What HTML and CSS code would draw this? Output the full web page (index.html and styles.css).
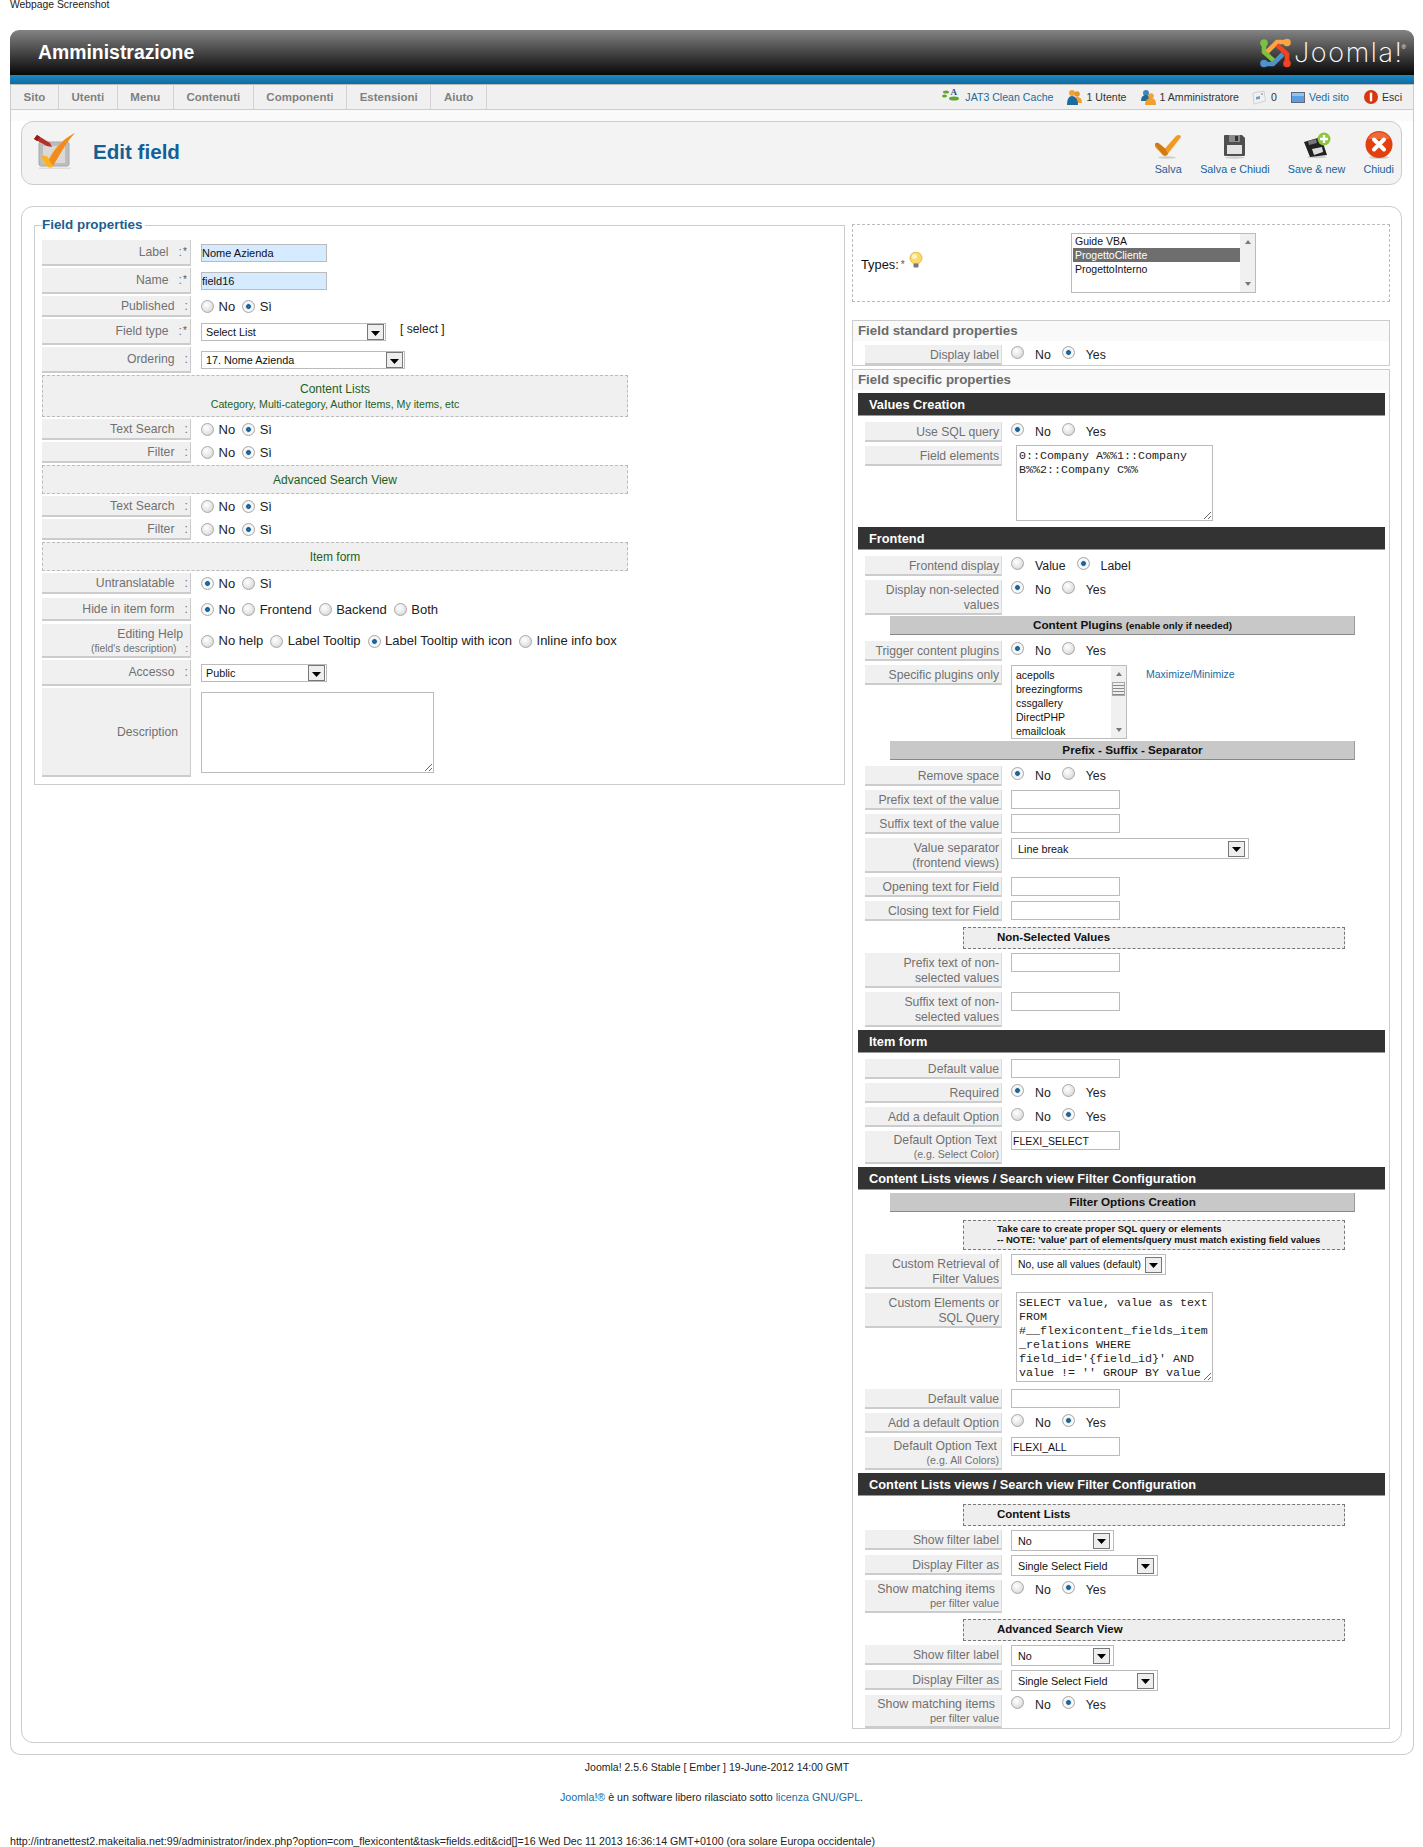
FILE: index.html
```html
<!DOCTYPE html>
<html lang="it">
<head>
<meta charset="utf-8">
<title>Edit field</title>
<link rel="stylesheet" href="styles.css">
</head>
<body>
<svg class="defs" width="0" height="0" aria-hidden="true">
  <symbol id="i-user" viewBox="0 0 15 15">
    <circle cx="10" cy="4" r="2.800" fill="#e8952a"/>
    <path d="M6 13c0-4 1.500-6 4.500-6s4.500 2 4.500 6z" fill="#f0a030"/>
    <circle cx="5" cy="3" r="3" fill="#efa235"/>
    <path d="M0 15c0-6 2-9 5-9s6 3 6 9z" fill="#1f6a9c"/>
  </symbol>
  <symbol id="i-admin" viewBox="0 0 15 15">
    <circle cx="5" cy="3" r="3" fill="#3d86b8"/>
    <path d="M0 11c0-4 2-6 5-6s4 2 4 6z" fill="#1f6a9c"/>
    <circle cx="10" cy="6" r="2.800" fill="#efa235"/>
    <path d="M4 15c0-4 2-7 6-7s5 3 5 7z" fill="#f0a030"/>
  </symbol>
  <symbol id="i-select-arrow" viewBox="0 0 9 5"><path d="M0 0h9L4.500 5z" fill="#000"/></symbol>
</svg>

<p class="shot-title">Webpage Screenshot</p>

<div class="admin">
  <header class="brand">
    <h1 class="brand-title">Amministrazione</h1>
    <div class="logo">
      <svg class="logo-mark" viewBox="0 0 31 30" width="31" height="30" fill="none" stroke-width="4.600">
        <path d="M4 5v9l10 9" stroke="#7ac143"/><circle cx="4" cy="5" r="3.800" fill="#7ac143"/>
        <path d="M26 4h-9L7 14" stroke="#f9a541"/><circle cx="27" cy="4.500" r="3.800" fill="#f9a541"/>
        <path d="M27 25v-9L17 7" stroke="#f44321"/><circle cx="27" cy="25.500" r="3.800" fill="#f44321"/>
        <path d="M4 26h9l10-10" stroke="#5091cd"/><circle cx="4" cy="25.500" r="3.800" fill="#5091cd"/>
      </svg>
      <span class="logo-word">Joomla!</span><sup class="logo-reg">®</sup>
    </div>
  </header>
  <div class="blue-strip"></div>
  <nav class="menubar">
    <ul class="menu">
      <li>Sito</li><li>Utenti</li><li>Menu</li><li>Contenuti</li><li>Componenti</li><li>Estensioni</li><li>Aiuto</li>
    </ul>
    <ul class="status">
      <li class="st-link st-jat">
        <svg width="17" height="14" viewBox="0 0 17 14"><ellipse cx="4" cy="5" rx="3" ry="1.500" fill="#5ea832"/><ellipse cx="2.500" cy="9" rx="2.500" ry="1.500" fill="#5ea832"/><ellipse cx="12" cy="11.500" rx="5" ry="2" fill="#5ea832"/><text x="8.500" y="8" class="jat-a">A</text></svg>
        JAT3 Clean Cache
      </li>
      <li class="st-user"><svg width="15" height="15"><use href="#i-user"/></svg>1 Utente</li>
      <li class="st-admin"><svg width="15" height="15"><use href="#i-admin"/></svg>1 Amministratore</li>
      <li class="st-msg">
        <svg width="14" height="15" viewBox="0 0 14 15"><path d="M1 3l11-2 1.500 10L2 14z" fill="#f1f1f1" stroke="#d0d0d0"/><path d="M4 7l4-1v3l-4 .5z" fill="#6f9fc4"/><circle cx="10" cy="4" r="1" fill="#8ab"/></svg>
        0
      </li>
      <li class="st-link st-site">
        <svg width="14" height="11" viewBox="0 0 14 11"><rect x=".5" y=".5" width="13" height="10" fill="#5aa0e0" stroke="#667"/><rect x="1" y="1" width="12" height="3" fill="#8cc4f4"/></svg>
        Vedi sito
      </li>
      <li class="st-out">
        <svg width="14" height="14" viewBox="0 0 14 14"><circle cx="7" cy="7" r="7" fill="#d9360f"/><rect x="5.800" y="2.500" width="2.400" height="9" rx="1" fill="#fff"/></svg>
        Esci
      </li>
    </ul>
  </nav>

  <div class="body-wrap">
    <section class="toolbar-box">
      <div class="page-head">
        <svg class="page-icon" width="44" height="40" viewBox="0 0 44 40">
          <rect x="6" y="11" width="30" height="24" rx="2" fill="#bdbdbd" stroke="#a8a8a8"/>
          <rect x="10" y="15" width="22" height="17" fill="#d9d9d9"/>
          <rect x="6" y="36.500" width="32" height="1.500" fill="#ddd"/>
          <path d="M9 25c3-1 6 0 7 3 5-10 12-19 26-26-9 9-16 23-22 33-1 2-3 2-5 1-4-3-6-7-6-11z" fill="#fbb320"/>
          <path d="M42 2c-9 9-16 23-22 33l-4-6C21 19 29 9 42 2z" fill="#f28a1e"/>
          <path d="M1 8l3-4 13 8 2 4-5-1z" fill="#b8302a"/>
          <path d="M1 8l3-4 3 2-3 4z" fill="#8d1f1c"/>
        </svg>
        <h2 class="page-title">Edit field</h2>
      </div>
      <ul class="actions">
        <li class="act act-save">
          <svg width="28" height="25" viewBox="0 0 28 25"><ellipse cx="13" cy="23.500" rx="9" ry="1.200" fill="#ccc"/><path d="M1 11c0-2 2-3 4-1.500l6 5L22 2c2-2 5-1 5 1L13 21c-1 1-3 1-4 0L2 14c-1-1-1-2-1-3z" fill="#f09a24"/><path d="M1 11l8 10c1 1 3 1 4 0l1-1-3-5.500-6-5c-2-1.500-4-.5-4 1.500z" fill="#cf7a14"/></svg>
          <span>Salva</span>
        </li>
        <li class="act act-close-save">
          <svg width="24" height="25" viewBox="0 0 24 25"><ellipse cx="12" cy="23.500" rx="10" ry="1.200" fill="#ccc"/><path d="M2 1h17l3 3v17a1 1 0 0 1-1 1H2a1 1 0 0 1-1-1V2a1 1 0 0 1 1-1z" fill="#4f4f4f"/><rect x="4" y="11" width="15" height="9" fill="#e4e4e4"/><rect x="6" y="1" width="11" height="7" fill="#8a8a8a"/><rect x="12" y="2" width="3" height="5" fill="#333"/></svg>
          <span>Salva e Chiudi</span>
        </li>
        <li class="act act-new">
          <svg width="28" height="27" viewBox="0 0 28 27"><ellipse cx="14" cy="25" rx="10" ry="1.200" fill="#ccc"/><path d="M1 10L18 5l6 18-17 2z" fill="#222"/><path d="M9 17l10-2 1 5-9 3z" fill="#dcdcdc"/><path d="M5 9l8-2 1 4-8 2z" fill="#777"/><circle cx="21" cy="7" r="6.500" fill="#8cc63f"/><path d="M21 3v8M17 7h8" stroke="#fff" stroke-width="2.400"/></svg>
          <span>Save &amp; new</span>
        </li>
        <li class="act act-close">
          <svg width="28" height="28" viewBox="0 0 28 28"><ellipse cx="14" cy="26.500" rx="10" ry="1.300" fill="#ccc"/><circle cx="14" cy="13.500" r="13.500" fill="#e2400f"/><path d="M14 1a13 11 0 0 1 11 7H3a13 11 0 0 1 11-7z" fill="#ef6a38"/><path d="M9 8.500l10 10M19 8.500l-10 10" stroke="#fff" stroke-width="4" stroke-linecap="round"/></svg>
          <span>Chiudi</span>
        </li>
      </ul>
    </section>

    <section class="content-box">
      <fieldset class="props">
        <legend class="props-legend">Field properties</legend>
        <div class="l-row h26"><div class="l-lbl">Label &nbsp; :<span class="req">*</span></div><div class="l-val"><input class="txt hl" type="text" value="Nome Azienda"></div></div>
        <div class="l-row h26"><div class="l-lbl">Name &nbsp; :<span class="req">*</span></div><div class="l-val"><input class="txt hl" type="text" value="field16"></div></div>
        <div class="l-row h21"><div class="l-lbl">Published &nbsp; :</div><div class="l-val"><input class="rd" type="radio" name="a"><label>No</label><input class="rd" type="radio" name="a" checked><label>Sì</label></div></div>
        <div class="l-row h26"><div class="l-lbl">Field type &nbsp; :<span class="req">*</span></div><div class="l-val"><div class="sel s-type"><span>Select List</span><i class="sel-btn"><svg width="9" height="5"><use href="#i-select-arrow"/></svg></i></div><span class="sel-link">[ select ]</span></div></div>
        <div class="l-row h26"><div class="l-lbl">Ordering &nbsp; :</div><div class="l-val"><div class="sel s-order"><span>17. Nome Azienda</span><i class="sel-btn"><svg width="9" height="5"><use href="#i-select-arrow"/></svg></i></div></div></div>
        <div class="l-head tall"><strong>Content Lists</strong><small>Category, Multi-category, Author Items, My items, etc</small></div>
        <div class="l-row h21"><div class="l-lbl">Text Search &nbsp; :</div><div class="l-val"><input class="rd" type="radio" name="b"><label>No</label><input class="rd" type="radio" name="b" checked><label>Sì</label></div></div>
        <div class="l-row h21"><div class="l-lbl">Filter &nbsp; :</div><div class="l-val"><input class="rd" type="radio" name="c"><label>No</label><input class="rd" type="radio" name="c" checked><label>Sì</label></div></div>
        <div class="l-head"><strong>Advanced Search View</strong></div>
        <div class="l-row h21"><div class="l-lbl">Text Search &nbsp; :</div><div class="l-val"><input class="rd" type="radio" name="d"><label>No</label><input class="rd" type="radio" name="d" checked><label>Sì</label></div></div>
        <div class="l-row h21"><div class="l-lbl">Filter &nbsp; :</div><div class="l-val"><input class="rd" type="radio" name="e"><label>No</label><input class="rd" type="radio" name="e" checked><label>Sì</label></div></div>
        <div class="l-head"><strong>Item form</strong></div>
        <div class="l-row h21 after-head"><div class="l-lbl">Untranslatable &nbsp; :</div><div class="l-val"><input class="rd" type="radio" name="f" checked><label>No</label><input class="rd" type="radio" name="f"><label>Sì</label></div></div>
        <div class="l-row h23"><div class="l-lbl">Hide in item form &nbsp; :</div><div class="l-val"><input class="rd" type="radio" name="g" checked><label>No</label><input class="rd" type="radio" name="g"><label>Frontend</label><input class="rd" type="radio" name="g"><label>Backend</label><input class="rd" type="radio" name="g"><label>Both</label></div></div>
        <div class="l-row h34"><div class="l-lbl two"><span>Editing Help</span><small>(field's description) &nbsp; :</small></div><div class="l-val"><input class="rd" type="radio" name="h"><label>No help</label><input class="rd" type="radio" name="h"><label>Label Tooltip</label><input class="rd" type="radio" name="h" checked><label>Label Tooltip with icon</label><input class="rd" type="radio" name="h"><label>Inline info box</label></div></div>
        <div class="l-row h26"><div class="l-lbl">Accesso &nbsp; :</div><div class="l-val"><div class="sel s-access"><span>Public</span><i class="sel-btn"><svg width="9" height="5"><use href="#i-select-arrow"/></svg></i></div></div></div>
        <div class="l-row h89 last"><div class="l-lbl desc">Description</div><div class="l-val"><textarea class="ta-desc"></textarea></div></div>
      </fieldset>

      <div class="side">
        <div class="types">
          <div class="types-label">Types:<span class="req">*</span>
            <svg class="bulb" width="14" height="17" viewBox="0 0 14 17"><circle cx="7" cy="6" r="6" fill="#fbd96b" stroke="#e6b84a"/><circle cx="5.500" cy="4.500" r="2.500" fill="#fff3c4"/><rect x="4.500" y="11.500" width="5" height="4" rx="1" fill="#777"/></svg>
          </div>
          <div class="listbox lb-types">
            <div class="lb-items"><div>Guide VBA</div><div class="on">ProgettoCliente</div><div>ProgettoInterno</div></div>
            <div class="sbar"><i class="up"></i><i class="down"></i></div>
          </div>
        </div>

        <div class="pbox std">
          <h3 class="pbox-title">Field standard properties</h3>
          <div class="r-row"><div class="r-lbl">Display label</div><div class="r-val"><input class="rd" type="radio" name="r1"><label>No</label><input class="rd" type="radio" name="r1" checked><label>Yes</label></div></div>
        </div>

        <div class="pbox specific">
          <h3 class="pbox-title">Field specific properties</h3>
          <h4 class="bar">Values Creation</h4>
          <div class="r-row"><div class="r-lbl">Use SQL query</div><div class="r-val"><input class="rd" type="radio" name="r2" checked><label>No</label><input class="rd" type="radio" name="r2"><label>Yes</label></div></div>
          <div class="r-row"><div class="r-lbl">Field elements</div><div class="r-val"><textarea class="mono ta-a">0::Company A%%1::Company B%%2::Company C%%</textarea></div></div>

          <h4 class="bar mt2">Frontend</h4>
          <div class="r-row"><div class="r-lbl">Frontend display</div><div class="r-val"><input class="rd" type="radio" name="r3"><label>Value</label><input class="rd" type="radio" name="r3" checked><label>Label</label></div></div>
          <div class="r-row"><div class="r-lbl h35">Display non-selected values</div><div class="r-val"><input class="rd" type="radio" name="r4" checked><label>No</label><input class="rd" type="radio" name="r4"><label>Yes</label></div></div>
          <h5 class="gbar mtn3">Content Plugins <small>(enable only if needed)</small></h5>
          <div class="r-row"><div class="r-lbl">Trigger content plugins</div><div class="r-val"><input class="rd" type="radio" name="r5" checked><label>No</label><input class="rd" type="radio" name="r5"><label>Yes</label></div></div>
          <div class="r-row"><div class="r-lbl">Specific plugins only</div><div class="r-val top0">
            <div class="listbox lb-plugins">
              <div class="lb-items"><div>acepolls</div><div>breezingforms</div><div>cssgallery</div><div>DirectPHP</div><div>emailcloak</div></div>
              <div class="sbar"><i class="up"></i><i class="thumb"></i><i class="down"></i></div>
            </div>
            <a class="maxmin">Maximize/Minimize</a>
          </div></div>
          <h5 class="gbar mtn2">Prefix - Suffix - Separator</h5>
          <div class="r-row"><div class="r-lbl">Remove space</div><div class="r-val"><input class="rd" type="radio" name="r6" checked><label>No</label><input class="rd" type="radio" name="r6"><label>Yes</label></div></div>
          <div class="r-row"><div class="r-lbl">Prefix text of the value</div><div class="r-val top0"><input class="txt r-txt" type="text"></div></div>
          <div class="r-row"><div class="r-lbl">Suffix text of the value</div><div class="r-val top0"><input class="txt r-txt" type="text"></div></div>
          <div class="r-row"><div class="r-lbl h35">Value separator<br>(frontend views)</div><div class="r-val top0"><div class="sel r-sel s-sep"><span>Line break</span><i class="sel-btn"><svg width="9" height="5"><use href="#i-select-arrow"/></svg></i></div></div></div>
          <div class="r-row"><div class="r-lbl">Opening text for Field</div><div class="r-val top0"><input class="txt r-txt" type="text"></div></div>
          <div class="r-row"><div class="r-lbl">Closing text for Field</div><div class="r-val top0"><input class="txt r-txt" type="text"></div></div>
          <h5 class="dbar">Non-Selected Values</h5>
          <div class="r-row"><div class="r-lbl h35">Prefix text of non-<br>selected values</div><div class="r-val top0"><input class="txt r-txt" type="text"></div></div>
          <div class="r-row"><div class="r-lbl h35">Suffix text of non-<br>selected values</div><div class="r-val top0"><input class="txt r-txt" type="text"></div></div>

          <h4 class="bar mtn1">Item form</h4>
          <div class="r-row"><div class="r-lbl">Default value</div><div class="r-val top0"><input class="txt r-txt" type="text"></div></div>
          <div class="r-row"><div class="r-lbl">Required</div><div class="r-val"><input class="rd" type="radio" name="r7" checked><label>No</label><input class="rd" type="radio" name="r7"><label>Yes</label></div></div>
          <div class="r-row"><div class="r-lbl">Add a default Option</div><div class="r-val"><input class="rd" type="radio" name="r8"><label>No</label><input class="rd" type="radio" name="r8" checked><label>Yes</label></div></div>
          <div class="r-row"><div class="r-lbl h33"><span class="lead">Default Option Text</span><small>(e.g. Select Color)</small></div><div class="r-val top0"><input class="txt r-txt" type="text" value="FLEXI_SELECT"></div></div>

          <h4 class="bar mtn1">Content Lists views / Search view Filter Configuration</h4>
          <h5 class="gbar mtn3">Filter Options Creation</h5>
          <h5 class="dbar note">Take care to create proper SQL query or elements<br>-- NOTE: 'value' part of elements/query must match existing field values</h5>
          <div class="r-row"><div class="r-lbl h35">Custom Retrieval of<br>Filter Values</div><div class="r-val top0"><div class="sel r-sel s-retr"><span>No, use all values (default)</span><i class="sel-btn"><svg width="9" height="5"><use href="#i-select-arrow"/></svg></i></div></div></div>
          <div class="r-row mb7"><div class="r-lbl h35">Custom Elements or<br>SQL Query</div><div class="r-val"><textarea class="mono ta-b">SELECT value, value as text FROM #__flexicontent_fields_item_relations WHERE field_id='{field_id}' AND value != '' GROUP BY value</textarea></div></div>
          <div class="r-row"><div class="r-lbl">Default value</div><div class="r-val top0"><input class="txt r-txt" type="text"></div></div>
          <div class="r-row"><div class="r-lbl">Add a default Option</div><div class="r-val"><input class="rd" type="radio" name="r9"><label>No</label><input class="rd" type="radio" name="r9" checked><label>Yes</label></div></div>
          <div class="r-row"><div class="r-lbl h33"><span class="lead">Default Option Text</span><small>(e.g. All Colors)</small></div><div class="r-val top0"><input class="txt r-txt" type="text" value="FLEXI_ALL"></div></div>

          <h4 class="bar mtn1">Content Lists views / Search view Filter Configuration</h4>
          <h5 class="dbar">Content Lists</h5>
          <div class="r-row"><div class="r-lbl">Show filter label</div><div class="r-val top0"><div class="sel r-sel s-no"><span>No</span><i class="sel-btn"><svg width="9" height="5"><use href="#i-select-arrow"/></svg></i></div></div></div>
          <div class="r-row"><div class="r-lbl">Display Filter as</div><div class="r-val top0"><div class="sel r-sel s-single"><span>Single Select Field</span><i class="sel-btn"><svg width="9" height="5"><use href="#i-select-arrow"/></svg></i></div></div></div>
          <div class="r-row"><div class="r-lbl h33 match"><span class="lead">Show matching items</span><small>per filter value</small></div><div class="r-val"><input class="rd" type="radio" name="r10"><label>No</label><input class="rd" type="radio" name="r10" checked><label>Yes</label></div></div>
          <h5 class="dbar">Advanced Search View</h5>
          <div class="r-row"><div class="r-lbl">Show filter label</div><div class="r-val top0"><div class="sel r-sel s-no"><span>No</span><i class="sel-btn"><svg width="9" height="5"><use href="#i-select-arrow"/></svg></i></div></div></div>
          <div class="r-row"><div class="r-lbl">Display Filter as</div><div class="r-val top0"><div class="sel r-sel s-single"><span>Single Select Field</span><i class="sel-btn"><svg width="9" height="5"><use href="#i-select-arrow"/></svg></i></div></div></div>
          <div class="r-row last"><div class="r-lbl h33 match"><span class="lead">Show matching items</span><small>per filter value</small></div><div class="r-val"><input class="rd" type="radio" name="r11"><label>No</label><input class="rd" type="radio" name="r11" checked><label>Yes</label></div></div>
        </div>
      </div>
    </section>
  </div>
</div>

<footer class="foot">
  <p class="foot-ver">Joomla! 2.5.6 Stable [ Ember ] 19-June-2012 14:00 GMT</p>
  <p class="foot-lic"><a>Joomla!®</a> è un software libero rilasciato sotto <a>licenza GNU/GPL</a>.</p>
</footer>
<p class="shot-url">http://intranettest2.makeitalia.net:99/administrator/index.php?option=com_flexicontent&amp;task=fields.edit&amp;cid[]=16 Wed Dec 11 2013 16:36:14 GMT+0100 (ora solare Europa occidentale)</p>
</body>
</html>
```

FILE: styles.css
```css
* { box-sizing: border-box; }
html, body { margin: 0; padding: 0; }
body { background: #fff; font: 11px/14px "Liberation Sans", Arial, sans-serif; color: #333; width: 1423px; height: 1847px; overflow: hidden; }
ul { list-style: none; margin: 0; padding: 0; }
h1, h2, h3, h4, h5, p { margin: 0; }
.defs { position: absolute; }

.shot-title { height: 30px; padding-left: 10px; font-size: 10.350px; line-height: 9px; color: #222; }

.admin { width: 1404px; margin-left: 10px; }
.brand { height: 45px; display: flex; justify-content: space-between; padding: 0 8px 0 28px; align-items: center; border-radius: 9px 9px 0 0; background: linear-gradient(#838383, #0a0a0a 98%); }
.brand-title { color: #fff; font-size: 19.400px; line-height: 45px; font-weight: bold; }
.logo { display: flex; align-items: flex-start; color: #fff; }
.logo-mark { margin-right: 3px; margin-top: 1px; }
.logo-word { font-family: Inter, "Liberation Sans", sans-serif; font-weight: 200; font-size: 27px; line-height: 31px; letter-spacing: 1.600px; }
.logo-reg { font-size: 6px; line-height: 10px; margin: 5px 0 0 -2px; }
.blue-strip { height: 9px; background: linear-gradient(#2088bf, #0c6ba3); }

.menubar { height: 26px; display: flex; justify-content: space-between; background: #f0f0f0; border: 1px solid #ccc; border-top-color: #bbb; border-bottom-width: 1px; }
.menu { display: flex; }
.menu li { padding: 0 12.600px; line-height: 24px; font-weight: bold; font-size: 11.500px; color: #808080; border-right: 1px solid #d4d4d4; }
.status { display: flex; align-items: center; padding-right: 11px; font-size: 10.600px; color: #333; }
.status li { display: flex; align-items: center; }
.status svg { margin-right: 4px; }
.st-link { color: #1a6ca0; }
.st-jat svg { margin-right: 6px; margin-top: -7px; }
.st-jat { margin-right: 14px; }
.st-user { margin-right: 14px; }
.st-admin { margin-right: 13px; }
.st-msg svg { margin-right: 5px; }
.st-msg { margin-right: 14px; }
.st-site { margin-right: 15px; }
.jat-a { font: bold 9px "Liberation Serif", serif; fill: #1d4f86; }

.body-wrap { border: 1px solid #ccc; border-top: 0; border-radius: 0 0 10px 10px; padding: 11px 11px 11px 10px; background: linear-gradient(#fafafa 11px, #fff 11px); }
.toolbar-box { height: 64px; display: flex; justify-content: space-between; background: #f3f3f3; border: 1px solid #ccc; border-radius: 12px; padding: 9px 7px 0 11px; }
.page-head { display: flex; align-items: flex-start; }
.page-icon { display: block; }
.page-title { color: #135f96; font-size: 20.600px; font-weight: bold; line-height: 24px; margin: 9px 0 0 16px; }
.actions { display: flex; gap: 18px; }
.act { display: flex; flex-direction: column; align-items: center; justify-content: flex-end; height: 45px; color: #1a6297; font-size: 10.800px; line-height: 14px; }
.act svg { display: block; margin-bottom: 3px; }

.content-box { margin-top: 21px; display: grid; grid-template-columns: 811px 538px; column-gap: 7px; align-items: start; border: 1px solid #ccc; border-radius: 12px; padding: 10px 11px 13px 12px; }

.props { margin: 0; padding: 7px 7px 7px; border: 1px solid #ccc; min-width: 0; }
.props-legend { padding: 0 3px 0 0; margin-left: 0; font-size: 13.400px; line-height: 16px; font-weight: bold; color: #1c5f92; }

.l-row { display: flex; margin-bottom: 2px; }
.l-row.last { margin-bottom: 0; }
.h21 { height: 21px; } .h23 { height: 23px; margin-top: 2px; margin-bottom: 3px; } .h26 { height: 26px; } .h34 { height: 34px; } .h89 { height: 89px; }
.after-head { margin-bottom: 4px; }
.l-lbl { flex: none; width: 149px; display: flex; align-items: center; justify-content: flex-end; padding-right: 2px; background: #f0f0f0; border-right: 1px solid #ccc; border-bottom: 2px solid #ccc; color: #707070; font-size: 12.200px; white-space: pre-wrap; }
.l-lbl.desc { padding-right: 12px; }
.l-lbl.two { flex-direction: column; align-items: flex-end; }
.l-lbl small { font-size: 10.300px; line-height: 14px; }
.l-lbl.two span:first-child { line-height: 16px; margin-right: 5px; }
.req { width: 5px; font-size: 10px; margin-left: 1px; color: #555; }
.l-val { display: flex; align-items: center; padding-left: 10px; font-size: 13px; color: #222; }
.l-val label { margin: 0 7px 0 4.500px; }

.txt { display: block; height: 19px; border: 1px solid #bbb; background: #fff; padding: 0 1px; margin: 0; font: 10.500px "Liberation Sans", Arial, sans-serif; color: #111; outline: 0; }
.hl { width: 126px; height: 18px; background: #d6ebff; font-size: 11px; padding: 0; }
.rd { appearance: none; flex: none; width: 13px; height: 13px; margin: 0; border-radius: 50%; border: 1px solid #a8a8a8; background: radial-gradient(circle at 40% 35%, #fff, #e6e6e6 55%, #c4c4c4); }
.rd:checked { background: radial-gradient(circle, #1583c9 0, #0c4f80 24%, #dfe6ec 36%, #fff 55%, #c4c4c4 100%); }

.sel { display: flex; align-items: center; justify-content: space-between; height: 18px; border: 1px solid #bbb; background: #fff; padding: 0 1px 0 4px; font-size: 10.800px; color: #111; white-space: nowrap; }
.sel-btn { flex: none; width: 17px; height: 16px; display: flex; align-items: center; justify-content: center; padding-top: 2px; background: #eee; border: 1px solid #777; }
.sel-btn svg { display: block; }
.s-type { width: 185px; } .s-order { width: 204px; } .s-access { width: 126px; }
.sel-link { margin-left: 14px; margin-top: -6px; font-size: 12px; }
.ta-desc { display: block; width: 233px; height: 81px; margin: 0; border: 1px solid #bbb; background: #fff; outline: 0; }

.l-head { width: 586px; height: 29px; margin-bottom: 2px; display: flex; flex-direction: column; align-items: center; justify-content: center; background: #f0f0f0; border: 1px dashed #bbb; color: #1d5f1d; }
.l-head strong { font-weight: normal; font-size: 12px; line-height: 16px; }
.l-head small { font-size: 10.650px; line-height: 14px; }
.l-head.tall { height: 42px; }

.side { min-width: 0; }
.types { height: 78px; margin-top: 7px; display: flex; align-items: center; border: 1px dashed #bbb; padding-left: 8px; }
.types-label { width: 210px; display: flex; align-items: center; font-size: 12.800px; color: #111; padding-top: 3px; }
.types-label .req { margin-left: 2px; margin-right: 3px; }
.bulb { margin-top: -9px; }
.listbox { display: flex; justify-content: space-between; background: #fff; border: 1px solid #bbb; font-size: 10.500px; line-height: 14px; color: #111; overflow: hidden; }
.lb-types { width: 185px; height: 60px; padding: 0 0 0 1px; }
.lb-types .lb-items { width: 167px; }
.lb-types .lb-items div { padding-left: 2px; }
.lb-items .on { background: #6e6e6e; color: #fff; }
.sbar { width: 15px; display: flex; flex-direction: column; align-items: center; background: #f0f0f0; }
.sbar .up, .sbar .down { width: 0; height: 0; border: 3px solid transparent; }
.sbar .up { border-bottom: 4px solid #777; margin-top: 3px; }
.sbar .down { border-top: 4px solid #777; margin-top: auto; margin-bottom: 3px; }
.sbar .thumb { width: 13px; height: 14px; margin-top: 6px; background: repeating-linear-gradient(#eee 0 2px, #888 2px 3px); border: 1px solid #aaa; }
.lb-plugins { width: 116px; height: 74px; padding-left: 4px; flex: none; }
.lb-plugins .sbar { margin-left: auto; }
.lb-plugins .lb-items { padding-top: 2px; }
.maxmin { margin-left: 19px; font-size: 10.500px; color: #1a6ca0; line-height: 18px; }

.pbox { display: flex; flex-direction: column; border: 1px solid #ccc; padding: 0 4px 0 5px; }
.pbox.std { margin-top: 18px; }
.pbox.specific { margin-top: 3px; }
.pbox-title { margin: 0 -4px 3px -5px; padding-left: 5px; height: 20px; line-height: 20px; background: #f9f9f9; font-size: 13.300px; font-weight: bold; color: #6a6a6a; }
.std .pbox-title { margin-bottom: 4px; }
.std .r-row { margin-bottom: 0; }

.bar { height: 23px; margin: 0 0 6px; padding-left: 11px; background: #333; border-bottom: 1px solid #999; color: #fff; font-size: 12.800px; line-height: 23px; font-weight: bold; }
.bar.mt2 { margin-top: 2px; } .bar.mtn1 { margin-top: -1px; } .gbar.mtn2 { margin-top: -2px; } .gbar.mtn3 { margin-top: -3px; }
.gbar { width: 465px; height: 19px; margin-left: 32px; margin-bottom: 6px; padding-left: 21px; text-align: center; background: #c8c8c8; border-bottom: 1px solid #888; border-right: 1px solid #999; font-size: 11.700px; line-height: 18px; color: #111; font-weight: bold; }
.gbar small { font-size: 9.800px; }
.dbar { width: 382px; height: 22px; margin: 2px 0 4px 105px; padding-left: 33px; background: #eee; border: 1px dashed #777; font-size: 11.500px; line-height: 18px; font-weight: bold; color: #111; }
.note { height: 30px; font-size: 9.500px; line-height: 11px; padding-top: 2px; }

.r-row { display: flex; align-items: flex-start; margin-bottom: 4px; margin-left: 7px; }
.r-row.last { margin-bottom: 0; }
.r-row.mb7 { margin-bottom: 7px; }
.r-lbl { flex: none; width: 137px; min-height: 20px; padding: 3px 2px 0 0; background: #f0f0f0; border-right: 1px solid #ddd; border-bottom: 2px solid #ccc; text-align: right; color: #707070; font-size: 12.200px; line-height: 15px; }
.h35 { height: 35px; }
.h33 { height: 33px; padding-top: 2px; }
.r-lbl small { display: block; font-size: 10.600px; line-height: 13px; }
.r-lbl .lead { margin-right: 2px; }
.match .lead { font-size: 12.400px; margin-right: 4px; }
.match small { font-size: 11px; }
.r-val { display: flex; align-items: flex-start; padding-left: 9px; padding-top: 1px; font-size: 12.300px; color: #222; }
.r-val.top0 { padding-top: 0; }
.r-val label { margin: 2px 11px 0 11px; }
.r-txt { width: 108.500px; }
.r-sel { height: 21px; padding: 0 3px 0 6px; font-size: 10.800px; }
.s-sep { width: 238px; } .s-retr { width: 155px; font-size: 10.400px; } .s-no { width: 103px; } .s-single { width: 147px; }
.mono { display: block; margin: -2px 0 0 5px; width: 197px; padding: 3px 0 0 2px; border: 1px solid #bbb; background: #fff; outline: 0; font: 11.670px/14px "Liberation Mono", "Courier New", monospace; color: #222; overflow: hidden; }
.ta-a { height: 76px; }
.ta-b { height: 90px; }

.foot { margin-top: 5px; width: 1423px; text-align: center; line-height: 14px; color: #222; }
.foot-ver { padding-left: 11px; font-size: 10.500px; }
.foot-lic { margin-top: 16px; font-size: 10.700px; }
.foot a { color: #1a6ca0; }
.shot-url { margin-top: 30px; padding-left: 10px; font-size: 10.650px; line-height: 14px; color: #222; white-space: nowrap; }
```
